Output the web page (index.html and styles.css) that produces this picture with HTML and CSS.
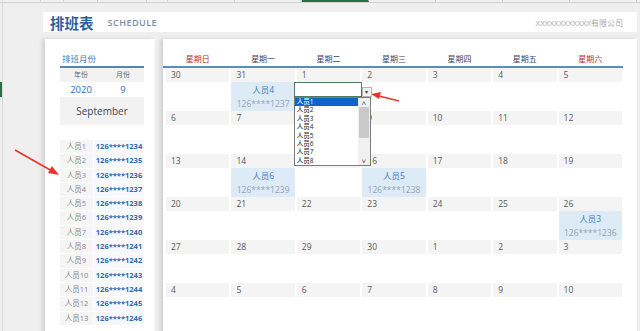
FILE: index.html
```html
<!DOCTYPE html>
<html lang="zh-CN">

<head>
    <meta charset="UTF-8">
    <meta name="viewport" content="width=device-width, initial-scale=1.0">
    <title>排班表</title>
    <link rel="stylesheet" href="styles.css">
</head>

<body>

    <div class="sheet-top">
        <span style="width:40px"></span>
        <span style="width:22px"></span>
        <span style="width:33px"></span>
        <span style="width:48px"></span>
        <span style="width:20px"></span>
        <span style="width:66px"></span>
        <span style="width:66px"></span>
        <span class="active" style="width:66px"></span>
        <span style="width:66px"></span>
        <span style="width:66px"></span>
        <span style="width:66px"></span>
        <span style="width:66px"></span>
    </div>
    <div class="row-mark"></div>

    <div class="page">
        <div class="header">
            <span class="title">排班表</span>
            <span class="subtitle">SCHEDULE</span>
            <span class="company">XXXXXXXXXXXX有限公司</span>
        </div>

        <div class="panels">
            <!-- left side: month picker and staff list -->
            <div class="side">
                <div class="side-title">排班月份</div>
                <div class="ym-head"><span>年份</span><span>月份</span></div>
                <div class="ym-value"><span>2020</span><span>9</span></div>
                <div class="month-name">September</div>

                <div class="staff">
                    <div class="staff-row"><span class="name">人员1</span><span class="tel">126****1234</span></div>
                    <div class="staff-row"><span class="name">人员2</span><span class="tel">126****1235</span></div>
                    <div class="staff-row"><span class="name">人员3</span><span class="tel">126****1236</span></div>
                    <div class="staff-row"><span class="name">人员4</span><span class="tel">126****1237</span></div>
                    <div class="staff-row"><span class="name">人员5</span><span class="tel">126****1238</span></div>
                    <div class="staff-row"><span class="name">人员6</span><span class="tel">126****1239</span></div>
                    <div class="staff-row"><span class="name">人员7</span><span class="tel">126****1240</span></div>
                    <div class="staff-row"><span class="name">人员8</span><span class="tel">126****1241</span></div>
                    <div class="staff-row"><span class="name">人员9</span><span class="tel">126****1242</span></div>
                    <div class="staff-row"><span class="name">人员10</span><span class="tel">126****1243</span></div>
                    <div class="staff-row"><span class="name">人员11</span><span class="tel">126****1244</span></div>
                    <div class="staff-row"><span class="name">人员12</span><span class="tel">126****1245</span></div>
                    <div class="staff-row"><span class="name">人员13</span><span class="tel">126****1246</span></div>
                </div>
            </div>

            <!-- right side: calendar -->
            <div class="main">
                <div class="week-head">
                    <span class="weekend">星期日</span>
                    <span>星期一</span>
                    <span>星期二</span>
                    <span>星期三</span>
                    <span>星期四</span>
                    <span>星期五</span>
                    <span class="weekend">星期六</span>
                </div>

                <div class="calendar">
                    <div class="day">30</div><div class="day">31</div><div class="day">1</div><div class="day">2</div><div class="day">3</div><div class="day">4</div><div class="day">5</div>
                    <div class="slot"></div>
                    <div class="slot shift"><span class="who">人员4</span><span class="num">126****1237</span></div>
                    <div class="slot picker-cell">
                        <div class="picker">
                            <div class="picker-input"></div>
                            <div class="picker-btn">&#9662;</div>
                            <div class="picker-list">
                                <div class="items">
                                    <div class="item selected">人员1</div>
                                    <div class="item">人员2</div>
                                    <div class="item">人员3</div>
                                    <div class="item">人员4</div>
                                    <div class="item">人员5</div>
                                    <div class="item">人员6</div>
                                    <div class="item">人员7</div>
                                    <div class="item">人员8</div>
                                </div>
                                <div class="scroll">
                                    <span class="arr">&#708;</span>
                                    <span class="thumb"></span>
                                    <span class="arr down">&#709;</span>
                                </div>
                            </div>
                        </div>
                    </div>
                    <div class="slot"></div><div class="slot"></div><div class="slot"></div><div class="slot"></div>

                    <div class="day">6</div><div class="day">7</div><div class="day">8</div><div class="day">9</div><div class="day">10</div><div class="day">11</div><div class="day">12</div>
                    <div class="slot"></div><div class="slot"></div><div class="slot"></div><div class="slot"></div><div class="slot"></div><div class="slot"></div><div class="slot"></div>

                    <div class="day">13</div><div class="day">14</div><div class="day">15</div><div class="day">16</div><div class="day">17</div><div class="day">18</div><div class="day">19</div>
                    <div class="slot"></div>
                    <div class="slot shift"><span class="who">人员6</span><span class="num">126****1239</span></div>
                    <div class="slot"></div>
                    <div class="slot shift"><span class="who">人员5</span><span class="num">126****1238</span></div>
                    <div class="slot"></div><div class="slot"></div><div class="slot"></div>

                    <div class="day">20</div><div class="day">21</div><div class="day">22</div><div class="day">23</div><div class="day">24</div><div class="day">25</div><div class="day">26</div>
                    <div class="slot"></div><div class="slot"></div><div class="slot"></div><div class="slot"></div><div class="slot"></div><div class="slot"></div>
                    <div class="slot shift"><span class="who">人员3</span><span class="num">126****1236</span></div>

                    <div class="day">27</div><div class="day">28</div><div class="day">29</div><div class="day">30</div><div class="day">1</div><div class="day">2</div><div class="day">3</div>
                    <div class="slot"></div><div class="slot"></div><div class="slot"></div><div class="slot"></div><div class="slot"></div><div class="slot"></div><div class="slot"></div>

                    <div class="day">4</div><div class="day">5</div><div class="day">6</div><div class="day">7</div><div class="day">8</div><div class="day">9</div><div class="day">10</div>
                    <div class="slot"></div><div class="slot"></div><div class="slot"></div><div class="slot"></div><div class="slot"></div><div class="slot"></div><div class="slot"></div>
                </div>
            </div>
        </div>
    </div>

    <!-- red annotation arrows -->
    <svg class="arrows" width="640" height="331" viewBox="0 0 640 331">
        <line x1="15" y1="150" x2="52" y2="171" stroke="#e8362c" stroke-width="1.6"/>
        <polygon points="59,175 48,173 52,166" fill="#e8362c"/>
        <line x1="399" y1="101" x2="379" y2="96" stroke="#e8362c" stroke-width="1.6"/>
        <polygon points="371,94 381,92 379,99" fill="#e8362c"/>
    </svg>

</body>

</html>
```

FILE: styles.css
```css
body {
    margin: 0;
    width: 640px;
    height: 331px;
    overflow: hidden;
    background-color: #efefef;
    background-image: linear-gradient(#d9d9d9, #d9d9d9);
    background-size: 1px 100%;
    background-position: 2px 0;
    background-repeat: no-repeat;
    font-family: "Open Sans", "Noto Sans CJK SC", sans-serif;
    position: relative;
}

.sheet-top {
    display: flex;
    height: 2px;
    border-bottom: 1px solid #d4d4d4;
}

.sheet-top span {
    border-right: 1px solid #d0d0d0;
    flex-shrink: 0;
}

.sheet-top .active {
    border-bottom: 2px solid #217346;
}

.row-mark {
    position: absolute;
    left: 0;
    top: 82px;
    width: 2px;
    height: 15px;
    background-color: #217346;
}

.page {
    padding: 0 3px 0 43px;
}

.header {
    margin-top: 9px;
    height: 20px;
    background-color: #fff;
    display: flex;
    align-items: center;
    padding: 0 14px 0 7px;
}

.title {
    font-size: 14.5px;
    font-weight: bold;
    color: #2b5d9b;
}

.subtitle {
    margin-left: 14px;
    font-size: 9px;
    font-weight: 600;
    color: #7b8ea8;
    letter-spacing: 0.5px;
}

.company {
    margin-left: auto;
    font-size: 8px;
    color: #a6a6a6;
}

.panels {
    display: flex;
    margin-top: 7px;
    height: 300px;
}

/* left panel */
.side {
    width: 84px;
    margin-left: 2px;
    padding: 0 11px 0 15px;
    background-color: #fff;
    box-shadow: -3px 0 4px rgba(0, 0, 0, 0.12);
}

.side-title {
    padding-top: 13px;
    height: 14px;
    line-height: 14px;
    font-size: 8.5px;
    color: #4a7db8;
    padding-left: 2px;
    border-bottom: 2px solid #5c84ab;
}

.ym-head,
.ym-value {
    display: flex;
}

.ym-head span,
.ym-value span {
    flex: 1;
    text-align: center;
}

.ym-head {
    height: 14px;
    line-height: 14px;
    background-color: #f2f2f2;
    font-size: 7px;
    color: #666;
}

.ym-value {
    height: 15px;
    line-height: 15px;
    font-size: 9.5px;
    color: #2f6fb5;
}

.month-name {
    height: 28px;
    line-height: 28px;
    background-color: #f2f2f2;
    text-align: center;
    font-size: 10px;
    color: #3b4a62;
}

.staff {
    margin-top: 15px;
    display: flex;
    flex-direction: column;
    gap: 1px;
}

.staff-row {
    display: flex;
    height: 13.3px;
    line-height: 13.3px;
    font-size: 7.5px;
    gap: 1px;
}

.staff-row .name {
    width: 33px;
    text-align: center;
    background-color: #f5f5f5;
    color: #858585;
}

.staff-row .tel {
    flex: 1;
    text-align: center;
    background-color: #f6f8fb;
    color: #2e6bb0;
    font-weight: bold;
}

/* right panel */
.main {
    flex: 1;
    margin-left: 8px;
    padding: 0 14px 0 0;
    background-color: #fff;
    box-shadow: -3px 0 4px rgba(0, 0, 0, 0.12);
}

.week-head {
    display: grid;
    grid-template-columns: repeat(7, 1fr);
    padding: 13px 0 0 2px;
    height: 14px;
    line-height: 14px;
    border-bottom: 2px solid #5c8db8;
    font-size: 8px;
    color: #3b4668;
}

.week-head span {
    text-align: center;
}

.week-head .weekend {
    color: #c0282d;
}

.calendar {
    display: grid;
    grid-template-columns: repeat(7, 1fr);
    padding-left: 2px;
}

.day {
    height: 14px;
    line-height: 14px;
    margin: 0 1px;
    padding-left: 5px;
    background-color: #f4f4f4;
    font-size: 8.5px;
    color: #595959;
}

.slot {
    height: 29px;
}

.shift {
    margin: 0 1px;
    background-color: #ddebf7;
    display: flex;
    flex-direction: column;
    align-items: center;
    justify-content: center;
    gap: 4px;
    font-size: 8.5px;
    line-height: 10px;
}

.shift .who {
    color: #3d7cc4;
}

.shift .num {
    color: #97a3b0;
}

/* data validation dropdown */
.picker-cell {
    position: relative;
}

.picker {
    position: absolute;
    left: -2px;
    top: 0;
    z-index: 2;
}

.picker-input {
    width: 66px;
    height: 13px;
    background-color: #fff;
    border: 1px solid #4e7b62;
}

.picker-btn {
    position: absolute;
    left: 68px;
    top: 5px;
    width: 8px;
    height: 8px;
    border: 1px solid #b5b5b5;
    background-color: #f2f2f2;
    font-size: 6px;
    line-height: 8px;
    text-align: center;
    color: #444;
}

.picker-list {
    display: flex;
    width: 75px;
    height: 67px;
    border: 1px solid #7a7a7a;
    background-color: #fff;
}

.items {
    flex: 1;
}

.item {
    height: 8.4px;
    line-height: 8.4px;
    font-size: 6.5px;
    color: #222;
    padding-left: 2px;
}

.item.selected {
    background-color: #0f64c8;
    color: #fff;
}

.scroll {
    width: 12px;
    background-color: #f0f0f0;
    display: flex;
    flex-direction: column;
    align-items: center;
}

.scroll .arr {
    font-size: 8px;
    line-height: 9px;
    color: #555;
}

.scroll .thumb {
    width: 10px;
    height: 31px;
    background-color: #c9c9c9;
}

.scroll .down {
    margin-top: auto;
}

.arrows {
    position: absolute;
    left: 0;
    top: 0;
    pointer-events: none;
}
```
